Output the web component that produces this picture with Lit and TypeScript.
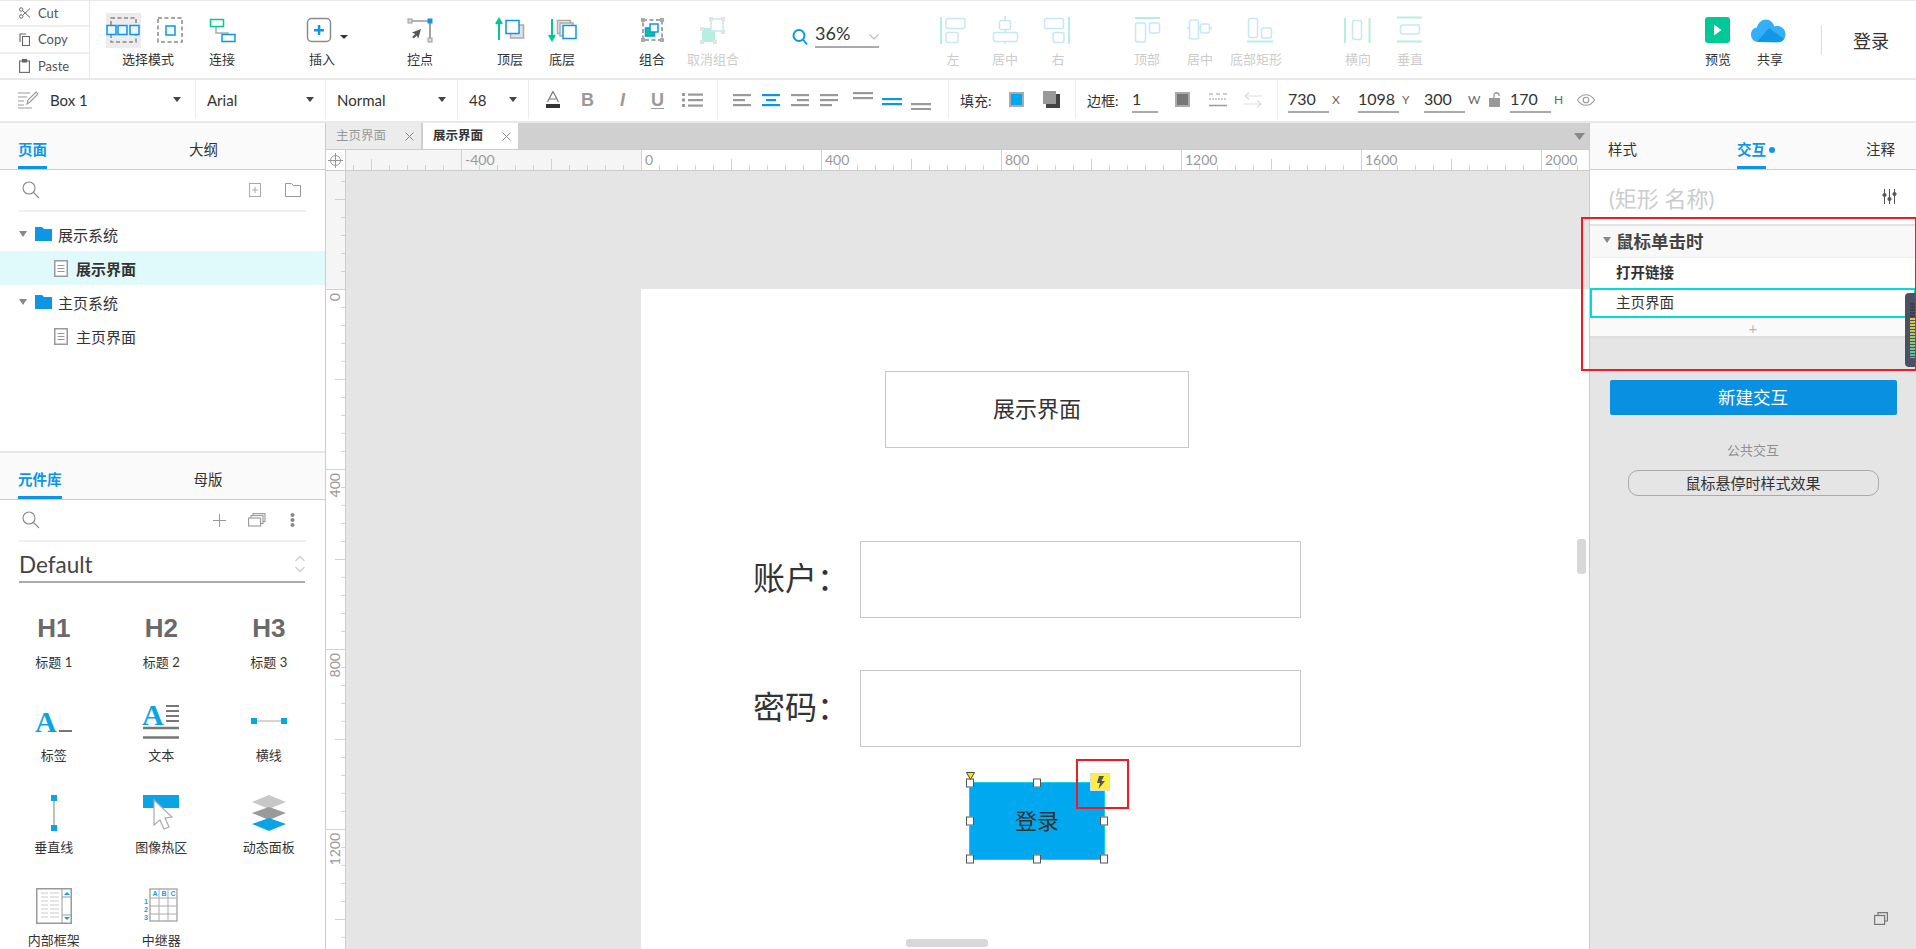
import { LitElement, html, svg, css } from 'lit';
import { customElement } from 'lit/decorators.js';

const BLUE = '#0d96e6';
const TEAL = '#00c896';
const GRAY = '#8c8c8c';
const FAINT_BLUE = '#c6e6fa';
const FAINT_TEAL = '#b6eee0';

const box = (x: number, y: number, w: number, h: number, stroke: string, fill = '#fff', rx = 0, sw = 1.5) =>
  svg`<rect x=${x} y=${y} width=${w} height=${h} rx=${rx} fill=${fill} stroke=${stroke} stroke-width=${sw}></rect>`;
const solid = (x: number, y: number, w: number, h: number, fill: string) =>
  svg`<rect x=${x} y=${y} width=${w} height=${h} fill=${fill}></rect>`;
const dashed = (x: number, y: number, w: number, h: number) =>
  svg`<rect x=${x} y=${y} width=${w} height=${h} fill="none" stroke="#888" stroke-width="1.5" stroke-dasharray="4 2.5"></rect>`;

// toolbar icons are written in page coordinates, the viewBox moves them into the tool
interface Tool {
  label: string;
  left: number;
  gap: number;
  width?: number;
  off?: boolean;
  body: unknown;
}

const tools: Tool[] = [
  {
    label: '选择模式', left: 106, gap: 16, width: 84,
    body: svg`
      ${solid(106, 13, 35, 35, '#ececec')}
      ${dashed(111, 18, 25, 24)}
      ${box(107, 25.5, 9, 9, BLUE, '#eef6fc')}
      ${box(118, 25.5, 9, 9, BLUE, '#eef6fc')}
      ${box(130, 25.5, 9, 9, BLUE, '#eef6fc')}
      ${dashed(158, 18, 24, 24)}
      ${box(166, 26, 9, 9, BLUE)}`,
  },
  {
    label: '连接', left: 196, gap: 6,
    body: svg`
      <path d="M216 26v7h12v2" fill="none" stroke="#aaa" stroke-width="1.5"></path>
      ${box(210.5, 19.5, 13, 7, TEAL)}
      ${box(222, 34.5, 13, 7, BLUE)}`,
  },
  {
    label: '插入', left: 296, gap: 48,
    body: svg`
      ${box(307.5, 18.5, 23, 23, GRAY, '#fff', 4)}
      ${solid(314, 29, 10, 2.5, BLUE)}
      ${solid(317.8, 25, 2.5, 10, BLUE)}
      <path d="M340 35h8l-4 4z" fill="#333"></path>`,
  },
  {
    label: '控点', left: 394, gap: 46,
    body: svg`
      <path d="M410 21h20v19" fill="none" stroke="#666" stroke-width="1.2"></path>
      ${box(408, 19, 4, 4, '#999', '#ddd', 0, 1)}
      ${solid(427.5, 18.5, 5, 5, BLUE)}
      ${box(428, 38, 4, 4, '#999', '#ddd', 0, 1)}
      <path d="M421 29l-9 3.5 3.2 1.4-3 3 1.6 1.6 3-3 1.4 3.2z" fill="#555"></path>`,
  },
  {
    label: '顶层', left: 484, gap: 38,
    body: svg`
      <path d="M499 20v20M496 24l3-5 3 5" fill="#00c896" stroke=${TEAL} stroke-width="2"></path>
      ${box(510.5, 25, 13, 13, '#aaa', '#e2e2e2')}
      ${box(506, 20.5, 13, 13, BLUE)}`,
  },
  {
    label: '底层', left: 536, gap: 0,
    body: svg`
      <path d="M552 19v20M549 35l3 5 3-5" fill="#00c896" stroke=${TEAL} stroke-width="2"></path>
      ${box(557.5, 20.5, 13, 13, '#aaa', '#eee')}
      ${box(560, 23, 13, 13, '#aaa', '#eee')}
      ${box(563, 25.5, 13, 13, BLUE)}`,
  },
  {
    label: '组合', left: 626, gap: 38,
    body: svg`
      ${dashed(643, 20, 19, 20)}
      ${solid(641, 18, 4, 4, '#aaa')}${solid(660, 18, 4, 4, '#aaa')}
      ${solid(641, 38, 4, 4, '#aaa')}${solid(660, 38, 4, 4, '#aaa')}
      ${box(645.5, 28, 9, 8, BLUE, TEAL)}
      ${box(650, 24, 8, 8, BLUE)}`,
  },
  {
    label: '取消组合', left: 687, gap: 9, off: true,
    body: svg`
      ${solid(702, 28, 13, 14, FAINT_TEAL)}
      ${box(711, 19, 12, 12, FAINT_BLUE)}
      ${solid(700, 27, 4, 4, '#e3e3e3')}${solid(713, 40, 4, 4, '#e3e3e3')}
      ${solid(700, 40, 4, 4, '#e3e3e3')}${solid(709, 17, 4, 4, '#e3e3e3')}
      ${solid(721, 17, 4, 4, '#e3e3e3')}${solid(721, 30, 4, 4, '#e3e3e3')}`,
  },
];

const aligns: Tool[] = [
  {
    label: '左', left: 927, gap: 45, off: true,
    body: svg`${solid(940, 17, 2, 27, FAINT_TEAL)}${box(946, 18.5, 19, 10, FAINT_BLUE, '#fff', 2)}${box(946, 32.5, 12, 10, FAINT_BLUE, '#fff', 2)}`,
  },
  {
    label: '居中', left: 979, gap: 0, off: true,
    body: svg`${solid(1004.5, 16, 1.5, 28, FAINT_BLUE)}${box(999.5, 20.5, 11, 9, FAINT_BLUE, '#fff', 2)}${box(993.5, 32.5, 24, 9, FAINT_BLUE, '#fff', 2)}`,
  },
  {
    label: '右', left: 1032, gap: 1, off: true,
    body: svg`${solid(1068, 17, 2, 27, FAINT_TEAL)}${box(1044.5, 18.5, 19, 10, FAINT_BLUE, '#fff', 2)}${box(1053, 32.5, 11, 10, FAINT_BLUE, '#fff', 2)}`,
  },
  {
    label: '顶部', left: 1121, gap: 37, off: true,
    body: svg`${solid(1135, 17, 25, 2, FAINT_TEAL)}${box(1135.5, 23, 10, 19, FAINT_BLUE, '#fff', 2)}${box(1149.5, 23, 10, 10, FAINT_BLUE, '#fff', 2)}`,
  },
  {
    label: '居中', left: 1174, gap: 1, off: true,
    body: svg`${solid(1187, 27.5, 25, 1.5, FAINT_TEAL)}${box(1189.5, 20, 9, 19, FAINT_BLUE, '#fff', 2)}${box(1200.5, 24, 9, 9, FAINT_BLUE, '#fff', 2)}`,
  },
  {
    label: '底部矩形', left: 1230, gap: 4, off: true,
    body: svg`${solid(1247, 40.5, 26, 2, FAINT_TEAL)}${box(1248.5, 18.5, 9, 19, FAINT_BLUE, '#fff', 2)}${box(1261.5, 28, 10, 10, FAINT_BLUE, '#fff', 2)}`,
  },
  {
    label: '横向', left: 1332, gap: 50, off: true,
    body: svg`${solid(1344, 18, 2, 25, FAINT_TEAL)}${solid(1368.5, 18, 2, 25, FAINT_TEAL)}${box(1352.5, 20.5, 9, 19, FAINT_BLUE, '#fff', 2)}`,
  },
  {
    label: '垂直', left: 1384, gap: 0, off: true,
    body: svg`${solid(1397, 16.5, 25, 2, FAINT_TEAL)}${solid(1397, 40.5, 25, 2, FAINT_TEAL)}${box(1400.5, 25, 19, 9, FAINT_BLUE, '#fff', 2)}`,
  },
  {
    label: '预览', left: 1692, gap: 256,
    body: svg`<rect x="1705" y="17" width="25" height="26" rx="3" fill=${TEAL}></rect><path d="M1714 24.5l7.5 5.5-7.5 5.5z" fill="#fff"></path>`,
  },
  {
    label: '共享', left: 1744, gap: 0,
    body: svg`
      <path d="M1758 42c-4 0-7-3-7-7.500 0-4 3-7 6-7 1-5 5-8 9-8 4 0 7 3 8.500 7 1-.5 2-.5 3-.5 4 0 8 3.500 8 8 0 5-3.500 8.500-8 8.500z" fill="#35aefb"></path>
      <path d="M1757 42l12-14 15 11c-1.500 2-3.500 3-6 3z" fill="#1296e6"></path>`,
  },
];

const toolTpl = (t: Tool) => {
  const w = t.width ?? 52;
  return html`<div class="tool ${t.off ? 'off' : ''}" style="margin-left:${t.gap}px;width:${w}px">
    <svg width=${w} height="36" viewBox="${t.left} 13 ${w} 36">${t.body}</svg>
    <span>${t.label}</span>
  </div>`;
};

const caret = html`<svg class="caret" width="8" height="5" viewBox="0 0 8 5"><path d="M0 0h8l-4 5z" fill="#444"></path></svg>`;
const tri = html`<svg width="8" height="6" viewBox="0 0 8 6"><path d="M0 0h8l-4 6z" fill="#888"></path></svg>`;
const searchIco = html`<svg width="18" height="18" viewBox="0 0 18 18" fill="none" stroke="#888" stroke-width="1.1"><circle cx="7" cy="7" r="6"></circle><path d="M11.500 11.500l5.500 5.500"></path></svg>`;
const docIco = html`<svg width="14" height="17" viewBox="0 0 14 17"><rect x=".75" y=".75" width="12.500" height="15.500" fill="#fff" stroke="#999" stroke-width="1.500"></rect><path d="M3.500 5.500h7M3.500 8.500h7M3.500 11.500h7" stroke="#999"></path></svg>`;
const folderIco = html`<svg width="17" height="14" viewBox="0 0 17 14"><path d="M0 0h7l2 2h8v12H0z" fill=${BLUE}></path></svg>`;

// three horizontal bars of an alignment button
const bars = (w: number[], top: number, x: (n: number) => number, color: string) =>
  html`<svg width="22" height="14" viewBox="0 0 22 14">
    ${w.map((n, i) => svg`<rect x=${x(n)} y=${top + i * 5} width=${n} height="2.200" fill=${color}></rect>`)}
  </svg>`;

const pages = [
  { name: '展示系统', folder: true },
  { name: '展示界面', active: true },
  { name: '主页系统', folder: true },
  { name: '主页界面' },
];

const widgets = [
  {
    label: '标题 1',
    ico: html`<b class="hd">H1</b>`,
  },
  { label: '标题 2', ico: html`<b class="hd">H2</b>` },
  { label: '标题 3', ico: html`<b class="hd">H3</b>` },
  {
    label: '标签',
    ico: html`<svg width="36" height="36" viewBox="0 0 36 36"><text x="-1" y="29" class="serifA" fill="#0aa3e3">A</text><rect x="23" y="27" width="13" height="2" fill="#777"></rect></svg>`,
  },
  {
    label: '文本',
    ico: html`<svg width="36" height="36" viewBox="0 0 36 36"><text x="-1" y="22" class="serifA" fill="#0aa3e3">A</text><path d="M23 3h13M23 8h13M23 13h13M23 18h13" stroke="#777" stroke-width="2"></path><path d="M0 25h36M0 34.500h36" stroke="#777" stroke-width="2.500"></path></svg>`,
  },
  {
    label: '横线',
    ico: html`<svg width="36" height="36" viewBox="0 0 36 36"><path d="M3 18h30" stroke="#aaa" stroke-width="1"></path><rect x="0" y="15" width="6" height="6" fill="#0aa3e3"></rect><rect x="30" y="15" width="6" height="6" fill="#0aa3e3"></rect></svg>`,
  },
  {
    label: '垂直线',
    ico: html`<svg width="36" height="36" viewBox="0 0 36 36"><path d="M18 3v30" stroke="#aaa" stroke-width="1.500"></path><rect x="15" y="0" width="6" height="6" fill="#0aa3e3"></rect><rect x="15" y="30" width="6" height="6" fill="#0aa3e3"></rect></svg>`,
  },
  {
    label: '图像热区',
    ico: html`<svg width="36" height="36" viewBox="0 0 36 36"><rect width="36" height="13" fill="#0aa3e3"></rect><path d="M11 5v25l6-5 4 9 5-2-4-9 7-1z" fill="#fff" stroke="#aaa" stroke-width="1.200"></path></svg>`,
  },
  {
    label: '动态面板',
    ico: html`<svg width="36" height="36" viewBox="0 0 36 36"><path d="M18 0l17 7-17 7-17-7z" fill="#c8c8c8"></path><path d="M18 12l17 6-17 7-17-7z" fill="#9a9a9a"></path><path d="M18 23l17 6-17 7-17-7z" fill="#0aa3e3"></path></svg>`,
  },
  {
    label: '内部框架',
    ico: html`<svg width="36" height="36" viewBox="0 0 36 36"><rect x=".75" y=".75" width="34.500" height="34.500" fill="#fff" stroke="#999" stroke-width="1.500"></rect><path d="M5 5h7M14 5h9M5 9h7M14 9h9M5 13h7M14 13h9M5 17h7M14 17h9M5 21h7M14 21h9M5 25h7M14 25h9M5 29h7M14 29h9" stroke="#ccc" stroke-width="1.200"></path><path d="M26 1v34M26 9h9M26 27h9" stroke="#999"></path><path d="M28 7l3-3 3 3zM28 29l3 3 3-3z" fill="#0aa3e3"></path></svg>`,
  },
  {
    label: '中继器',
    ico: html`<svg width="36" height="36" viewBox="0 0 36 36"><rect x="7" y="1" width="27" height="32" fill="#fff" stroke="#999" stroke-width="1.200"></rect><path d="M7 10h27M7 18h27M7 26h27M16 1v32M25 1v32" stroke="#aaa"></path><text x="9.500" y="8" class="mini">A</text><text x="18.500" y="8" class="mini">B</text><text x="27.500" y="8" class="mini">C</text><text x="1" y="16" class="mini">1</text><text x="1" y="24" class="mini">2</text><text x="1" y="32" class="mini">3</text></svg>`,
  },
];

const range = (from: number, to: number, step: number) => {
  const out: number[] = [];
  for (let v = from; v <= to; v += step) out.push(v);
  return out;
};

// 180px on screen stands for 400 units, a tick each 18px
const hRuler = () => html`<svg class="ruler-h" width="1243" height="20" viewBox="0 0 1243 20">
  <rect width="295" height="20" fill="#f5f5f5"></rect>
  ${range(7, 1243, 18).map((x) => {
    const unit = Math.round((x - 295) / 18);
    const h = unit % 10 === 0 ? 20 : unit % 5 === 0 ? 11 : 5;
    return svg`<rect x=${x} y=${20 - h} width="1" height=${h} fill="#d2d2d2"></rect>`;
  })}
  ${[-400, 0, 400, 800, 1200, 1600, 2000].map(
    (u) => svg`<text x=${295 + u * 0.45 + 4} y="15" class="rl">${u}</text>`,
  )}
</svg>`;

const vRuler = () => html`<svg class="ruler-v" width="20" height="779" viewBox="0 0 20 779">
  <rect width="20" height="118" fill="#f5f5f5"></rect>
  ${range(10, 779, 18).map((y) => {
    const unit = Math.round((y - 118) / 18);
    const w = unit % 10 === 0 ? 20 : unit % 5 === 0 ? 11 : 5;
    return svg`<rect x=${20 - w} y=${y} width=${w} height="1" fill="#d2d2d2"></rect>`;
  })}
  ${[0, 400, 800, 1200].map((u) => {
    const y = 118 + u * 0.45 + 4;
    return svg`<text transform="translate(14 ${y}) rotate(-90)" text-anchor="end" class="rl">${u}</text>`;
  })}
  <rect x="19" width="1" height="779" fill="#ccc"></rect>
</svg>`;

@customElement('app-root')
export class AppRoot extends LitElement {
  static styles = css`
    :host {
      display: flex;
      flex-direction: column;
      width: 100%;
      height: 100vh;
      overflow: hidden;
      background: #fff;
      color: #333;
      font-family: Lato, 'Noto Sans CJK SC', sans-serif;
      font-size: 15px;
    }
    svg {
      display: block;
      flex: none;
    }

    /* first toolbar row */
    .bar1 {
      display: flex;
      height: 80px;
      flex: none;
      box-sizing: border-box;
      border-top: 1px solid #e8e8e8;
      border-bottom: 2px solid #e8e8e8;
    }
    .clip {
      width: 90px;
      flex: none;
      box-sizing: border-box;
      border-right: 1px solid #e8e8e8;
      display: flex;
      flex-direction: column;
    }
    .clip div {
      flex: 1;
      display: flex;
      align-items: center;
      gap: 8px;
      padding-left: 19px;
      font-size: 13px;
      color: #555;
      border-bottom: 2px solid #efefef;
    }
    .clip div:last-child {
      border-bottom: 0;
    }
    .tool {
      flex: none;
      display: flex;
      flex-direction: column;
      align-items: center;
      padding-top: 12px;
      font-size: 13px;
      white-space: nowrap;
    }
    .tool span {
      line-height: 18px;
      margin-top: 1px;
    }
    .tool.off span {
      color: #ccc;
    }
    .zoom {
      flex: none;
      width: 90px;
      margin-left: 53px;
      display: flex;
      align-items: flex-end;
      height: 47px;
    }
    .zoom .val {
      margin-left: 7px;
      width: 64px;
      height: 26px;
      box-sizing: border-box;
      border-bottom: 2px solid #aaa;
      font-size: 18px;
      line-height: 22px;
      display: flex;
      justify-content: space-between;
      align-items: flex-start;
    }
    .zoom .val svg {
      margin-top: 12px;
    }
    .zoom > svg {
      margin-bottom: 2px;
    }
    .sep {
      width: 1px;
      height: 30px;
      background: #ddd;
      margin: 24px 0 0 25px;
    }
    .login {
      margin: 27px 0 0 31px;
      font-size: 18px;
      line-height: 26px;
    }

    /* second toolbar row */
    .bar2 {
      display: flex;
      height: 43px;
      flex: none;
      box-sizing: border-box;
      border-bottom: 2px solid #e8e8e8;
      padding-bottom: 2px;
    }
    .cell {
      flex: none;
      box-sizing: border-box;
      display: flex;
      align-items: center;
      border-right: 1px solid #ececec;
      padding: 0 11px;
    }
    .c-name {
      width: 196px;
      padding: 0 14px 0 18px;
      gap: 12px;
    }
    .c-font {
      width: 130px;
    }
    .c-style {
      width: 132px;
    }
    .c-size {
      width: 71px;
    }
    .c-text {
      width: 189px;
      padding: 0 0 0 6px;
    }
    .c-align {
      width: 231px;
      padding: 0 0 0 9px;
    }
    .c-fill {
      width: 127px;
    }
    .c-line {
      width: 202px;
    }
    .c-geo {
      flex: 1;
      border-right: 0;
      padding-left: 10px;
    }
    .caret {
      margin-left: auto;
    }
    .btn {
      flex: none;
      width: 35px;
      display: flex;
      justify-content: center;
      color: #9a9a9a;
      font: bold 18px/20px 'Liberation Sans', sans-serif;
    }
    .btn i {
      font-style: italic;
    }
    .btn u {
      text-underline-offset: 2px;
    }
    .al {
      flex: none;
      width: 29px;
      display: flex;
      justify-content: center;
    }
    .al.skip {
      margin-left: 6px;
    }
    .lab {
      flex: none;
      font-size: 14px;
      white-space: nowrap;
    }
    .c-fill .lab,
    .c-line .lab {
      width: 49px;
    }
    .c-line .lab {
      width: 45px;
    }
    .swatch {
      flex: none;
      width: 15px;
      height: 15px;
      box-sizing: border-box;
      border: 2px solid #aaa;
      background: #00a8f0;
    }
    .swatch.dark {
      background: #777;
    }
    .shadow {
      margin-left: 19px;
    }
    .input {
      flex: none;
      box-sizing: border-box;
      height: 24px;
      border-bottom: 2px solid #aaa;
      font-size: 16px;
      line-height: 20px;
      margin-top: 2px;
    }
    .w26 {
      width: 26px;
    }
    .w41 {
      width: 41px;
    }
    .letter {
      flex: none;
      font-size: 12px;
      color: #666;
      margin-left: 3px;
    }
    .c-line .swatch {
      margin-left: 17px;
    }
    .c-line .dash {
      margin-left: 19px;
    }
    .c-line .swap {
      margin-left: 17px;
    }

    /* panels */
    .main {
      flex: 1;
      display: flex;
      min-height: 0;
    }
    .left {
      width: 326px;
      flex: none;
      box-sizing: border-box;
      border-right: 1px solid #ccc;
      display: flex;
      flex-direction: column;
    }
    .tabs {
      height: 47px;
      flex: none;
      box-sizing: border-box;
      display: flex;
      background: #fafafa;
      border-bottom: 1px solid #ccc;
      padding-left: 18px;
      font-size: 14.5px;
      line-height: 20px;
    }
    .tab {
      position: relative;
      height: 46px;
      box-sizing: border-box;
      padding-top: 17px;
      border-bottom: 3px solid transparent;
    }
    .tab.on {
      color: #0d96e6;
      border-bottom-color: #0d96e6;
      font-weight: 700;
    }
    .pages {
      height: 330px;
      flex: none;
      box-sizing: border-box;
      border-bottom: 2px solid #e8e8e8;
    }
    .p-tabs {
      gap: 142px;
    }
    .l-tabs {
      gap: 132px;
    }
    .tools {
      height: 42px;
      margin: 0 19px;
      box-sizing: border-box;
      border-bottom: 2px solid #efefef;
      display: flex;
      align-items: center;
      padding: 0 5px 0 3px;
    }
    .lib .tools {
      padding-right: 11px;
    }
    .tools .first {
      margin-left: auto;
    }
    .tree {
      margin-top: 5px;
    }
    .row {
      height: 34px;
      display: flex;
      align-items: center;
      box-sizing: border-box;
      white-space: nowrap;
    }
    .row.folder {
      padding-left: 19px;
    }
    .row.folder svg:nth-child(2) {
      margin: 0 6px 0 8px;
    }
    .row.page {
      padding-left: 54px;
      gap: 8px;
    }
    .row.on {
      background: #e0f9fa;
      font-weight: 700;
    }
    .lib {
      flex: 1;
      min-height: 0;
    }
    .default {
      height: 41px;
      margin: 0 20px 0 19px;
      box-sizing: border-box;
      border-bottom: 2px solid #aaa;
      padding-top: 5px;
      display: flex;
      align-items: center;
      justify-content: space-between;
      font-size: 22.5px;
      color: #444;
    }
    .grid {
      margin-top: 27px;
      display: grid;
      grid-template-columns: repeat(3, 107.5px);
      grid-auto-rows: 92.67px;
    }
    .widget {
      display: flex;
      flex-direction: column;
      align-items: center;
      font-size: 13px;
      line-height: 18px;
      white-space: nowrap;
    }
    .widget .ico {
      height: 36px;
      margin-bottom: 7px;
      display: flex;
      align-items: center;
    }
    .widget svg {
      overflow: visible;
    }
    .hd {
      font: bold 26px/36px 'Liberation Sans', sans-serif;
      color: #6a6a6a;
    }
    .serifA {
      font: bold 30px 'Liberation Serif', serif;
    }
    .mini {
      font: bold 7px 'Liberation Sans', sans-serif;
      fill: #0aa3e3;
    }

    /* middle */
    .mid {
      width: 1263px;
      flex: none;
      display: flex;
      flex-direction: column;
    }
    .doc-tabs {
      height: 27px;
      flex: none;
      box-sizing: border-box;
      display: flex;
      background: #d0d0d0;
      position: relative;
      border-bottom: 1px solid #ccc;
    }
    .doc {
      width: 95px;
      box-sizing: border-box;
      background: #ececec;
      display: flex;
      align-items: center;
      justify-content: space-between;
      padding: 0 7px 0 10px;
      margin-right: 2px;
      font-size: 12.5px;
      color: #999;
    }
    .doc span {
      margin-bottom: 4px;
    }
    .doc.on {
      background: #fff;
      color: #333;
      font-weight: 700;
      margin-right: 0;
    }
    .doc-more {
      position: absolute;
      right: 4px;
      top: 10px;
    }
    .rulers {
      height: 20px;
      flex: none;
      display: flex;
      border-bottom: 1px solid #ccc;
    }
    .corner {
      width: 19px;
      flex: none;
      display: flex;
      align-items: center;
      justify-content: center;
      background: #fff;
      border-right: 1px solid #ccc;
    }
    .rl {
      font: 14px Lato, sans-serif;
      fill: #999;
    }
    .work {
      flex: 1;
      display: flex;
      min-height: 0;
    }
    .canvas {
      position: relative;
      flex: 1;
      background: #e5e5e5;
    }
    .sheet {
      position: absolute;
      left: 295px;
      top: 118px;
      right: 0;
      bottom: 0;
      background: #fff;
    }
    .shape {
      position: absolute;
      box-sizing: border-box;
      border: 1px solid #c8c8c8;
      display: flex;
      align-items: center;
      justify-content: center;
    }
    .title {
      left: 244px;
      top: 82px;
      width: 304px;
      height: 77px;
      font-size: 22px;
      padding-bottom: 5px;
    }
    .in1,
    .in2 {
      left: 219px;
      width: 441px;
      height: 77px;
    }
    .in1 {
      top: 252px;
    }
    .in2 {
      top: 381px;
    }
    .cap {
      position: absolute;
      left: 112px;
      font-size: 32px;
      line-height: 40px;
    }
    .cap1 {
      top: 269px;
    }
    .cap2 {
      top: 398px;
    }
    .submit {
      left: 328px;
      top: 493px;
      width: 136px;
      height: 78px;
      padding-bottom: 4px;
      background: #00a8f0;
      border: 1.5px solid #18d0e0;
      font-size: 22px;
    }
    .handle {
      position: absolute;
      width: 8px;
      height: 9px;
      box-sizing: border-box;
      background: #fff;
      border: 1px solid #555;
      transform: translate(-50%, -50%);
    }
    .anchor {
      position: absolute;
      left: -4px;
      top: -11px;
    }
    .flash {
      position: absolute;
      left: 120px;
      top: -10px;
      width: 20px;
      height: 18px;
      box-sizing: border-box;
      background: #ffee44;
      border: 1px solid #ddd;
      display: flex;
      align-items: center;
      justify-content: center;
    }
    .mark {
      position: absolute;
      box-sizing: border-box;
      border: 2px solid #ed1c24;
      z-index: 2;
    }
    .mark-flash {
      left: 435px;
      top: 470px;
      width: 53px;
      height: 50px;
    }
    .mark-act {
      left: -9px;
      top: 94px;
      width: 336px;
      height: 154px;
    }
    .thumb {
      position: absolute;
      background: #d8d8d8;
      border-radius: 3px;
    }
    .thumb-v {
      left: 936px;
      top: 250px;
      width: 9px;
      height: 35px;
    }
    .thumb-h {
      left: 265px;
      top: 650px;
      width: 82px;
      height: 8px;
    }

    /* right */
    .right {
      position: relative;
      flex: 1;
      box-sizing: border-box;
      border-left: 1px solid #ccc;
      display: flex;
      flex-direction: column;
    }
    .r-tabs {
      gap: 100px;
    }
    .dot {
      position: absolute;
      right: -9px;
      top: 24px;
      width: 6px;
      height: 6px;
      border-radius: 50%;
      background: #0d96e6;
    }
    .name {
      height: 55px;
      flex: none;
      box-sizing: border-box;
      display: flex;
      align-items: center;
      justify-content: space-between;
      padding: 0 19px;
      margin-top: -1px;
      font-size: 22px;
      color: #ccc;
    }
    .ev {
      height: 34px;
      flex: none;
      box-sizing: border-box;
      background: #f8f8f8;
      border-top: 2px solid #e2e2e2;
      border-bottom: 1px solid #eee;
      display: flex;
      align-items: center;
      gap: 6px;
      padding: 0 0 3px 13px;
      font-size: 17.5px;
      font-weight: 700;
      color: #444;
    }
    .ev span {
      margin-left: -1px;
    }
    .act {
      height: 30px;
      flex: none;
      box-sizing: border-box;
      display: flex;
      align-items: center;
      padding: 0 0 3px 26px;
      font-weight: 700;
      font-size: 14.5px;
    }
    .target {
      height: 30px;
      flex: none;
      box-sizing: border-box;
      display: flex;
      align-items: center;
      padding: 0 0 3px 24px;
      border: 2px solid #00dcd8;
      font-size: 14.5px;
    }
    .add {
      height: 20px;
      flex: none;
      box-sizing: border-box;
      background: #fafafa;
      border-bottom: 2px solid #ddd;
      display: flex;
      align-items: center;
      justify-content: center;
      color: #bbb;
      font-size: 16px;
    }
    .rest {
      flex: 1;
      background: #e5e5e5;
      display: flex;
      flex-direction: column;
      align-items: center;
      padding-top: 42px;
    }
    .new {
      width: 287px;
      height: 35px;
      border-radius: 2px;
      background: #0a90e0;
      color: #fff;
      font-size: 17.5px;
      padding-bottom: 2px;
      box-sizing: border-box;
      display: flex;
      align-items: center;
      justify-content: center;
    }
    .shared {
      margin-top: 25px;
      font-size: 13px;
      line-height: 20px;
      color: #909090;
    }
    .pill {
      margin-top: 10px;
      width: 251px;
      height: 26px;
      box-sizing: border-box;
      border: 1.5px solid #aaa;
      border-radius: 10px;
      display: flex;
      align-items: center;
      justify-content: center;
      padding-bottom: 2px;
      font-size: 15px;
    }
    .dock {
      margin: auto 28px 24px auto;
    }
    .meter {
      position: absolute;
      right: 0;
      top: 170px;
      width: 11px;
      height: 74px;
      box-sizing: border-box;
      padding: 9px 0 9px 5px;
      background: #4c5161;
      border-radius: 4px 0 0 4px;
      z-index: 1;
    }
    .meter div {
      height: 100%;
      background: repeating-linear-gradient(#4c5161 0 1px, transparent 1px 3px),
        linear-gradient(#3a3f4c 0 28%, #e8c84a 29%, #9ccc66 65%, #4cbfa8 100%);
    }
  `;

  renderTopBar() {
    return html`<div class="bar1">
      <div class="clip">
        <div>
          <svg width="11" height="12" viewBox="0 0 11 12" fill="none" stroke="#666" stroke-width="1"><circle cx="2.200" cy="2.500" r="1.700"></circle><circle cx="2.200" cy="9.500" r="1.700"></circle><path d="M3.500 3.500L11 10.500M3.500 8.500L11 1.500"></path></svg>
          Cut
        </div>
        <div>
          <svg width="11" height="13" viewBox="0 0 11 13" fill="none" stroke="#666" stroke-width="1.100"><path d="M1 9V1h6"></path><rect x="3.500" y="3.500" width="7" height="9"></rect></svg>
          Copy
        </div>
        <div>
          <svg width="11" height="14" viewBox="0 0 11 14" fill="none" stroke="#666" stroke-width="1.100"><rect x=".6" y="2" width="9.800" height="11.400"></rect><rect x="3.500" y=".5" width="4" height="2.500" fill="#666"></rect></svg>
          Paste
        </div>
      </div>
      ${tools.map(toolTpl)}
      <div class="zoom">
        <svg width="16" height="18" viewBox="0 0 16 18" fill="none" stroke="#0d96e6" stroke-width="2"><circle cx="7" cy="7.500" r="5.500"></circle><path d="M11 11.500l4 5"></path></svg>
        <div class="val">36%<svg width="10" height="6" viewBox="0 0 10 6" fill="none" stroke="#bbb" stroke-width="1.200"><path d="M.5.5L5 5 9.500.5"></path></svg></div>
      </div>
      ${aligns.map(toolTpl)}
      <div class="sep"></div>
      <div class="login">登录</div>
    </div>`;
  }

  renderFormatBar() {
    return html`<div class="bar2">
      <div class="cell c-name">
        <svg width="20" height="18" viewBox="0 0 20 18" fill="none" stroke="#999" stroke-width="1.100"><path d="M0 2h12M0 6h9M0 10h6M0 14h6M0 17h14"></path><path d="M9 13l1-4 8-8 2 2-8 8z"></path></svg>
        <span>Box 1</span>${caret}
      </div>
      <div class="cell c-font"><span>Arial</span>${caret}</div>
      <div class="cell c-style"><span>Normal</span>${caret}</div>
      <div class="cell c-size"><span>48</span>${caret}</div>
      <div class="cell c-text">
        <div class="btn">
          <svg width="14" height="17" viewBox="0 0 14 17"><path d="M1.500 11L7 0.500 12.500 11M3.500 8h7" fill="none" stroke="#777" stroke-width="1.200"></path><rect y="13" width="14" height="4" fill="#333"></rect></svg>
        </div>
        <div class="btn">B</div>
        <div class="btn"><i>I</i></div>
        <div class="btn"><u>U</u></div>
        <div class="btn">
          <svg width="21" height="14" viewBox="0 0 21 14" fill="#999"><rect width="3" height="3" y="0"></rect><rect width="3" height="3" y="5.500"></rect><rect width="3" height="3" y="11"></rect><rect x="6" y=".5" width="15" height="2.200"></rect><rect x="6" y="6" width="15" height="2.200"></rect><rect x="6" y="11.500" width="15" height="2.200"></rect></svg>
        </div>
      </div>
      <div class="cell c-align">
        <div class="al">${bars([18, 12, 18], 1, () => 2, '#999')}</div>
        <div class="al">${bars([18, 10, 18], 1, (n) => 11 - n / 2, BLUE)}</div>
        <div class="al">${bars([18, 12, 18], 1, (n) => 20 - n, '#999')}</div>
        <div class="al">${bars([18, 18, 12], 1, () => 2, '#999')}</div>
        <div class="al skip">
          <svg width="22" height="20" viewBox="0 0 22 20" fill="#999"><rect width="20" height="2.200" y="2"></rect><rect width="20" height="2.200" y="7"></rect></svg>
        </div>
        <div class="al">
          <svg width="22" height="20" viewBox="0 0 22 20" fill=${BLUE}><rect width="20" height="2.200" y="8"></rect><rect width="20" height="2.200" y="13"></rect></svg>
        </div>
        <div class="al">
          <svg width="22" height="20" viewBox="0 0 22 20" fill="#999"><rect width="20" height="2.200" y="13"></rect><rect width="20" height="2.200" y="18"></rect></svg>
        </div>
      </div>
      <div class="cell c-fill">
        <span class="lab">填充:</span>
        <div class="swatch"></div>
        <svg class="shadow" width="17" height="17" viewBox="0 0 17 17"><rect x="3" y="3" width="14" height="14" fill="#444"></rect><rect width="13" height="13" fill="#999"></rect></svg>
      </div>
      <div class="cell c-line">
        <span class="lab">边框:</span>
        <div class="input w26">1</div>
        <div class="swatch dark"></div>
        <svg class="dash" width="18" height="14" viewBox="0 0 18 14" fill="none" stroke="#999"><path d="M0 1h18" stroke-dasharray="4 3"></path><path d="M0 6h18" stroke-dasharray="2 1"></path><path d="M0 12.500h18" stroke-width="1.500"></path></svg>
        <svg class="swap" width="18" height="16" viewBox="0 0 18 16" fill="none" stroke="#ddd" stroke-width="1.200"><path d="M18 4H1M5 .5L1 4l4 3.500M0 12h17M13 8.500l4 3.500-4 3.500"></path></svg>
      </div>
      <div class="cell c-geo">
        <div class="input w41">730</div><span class="letter" style="width:26px">X</span>
        <div class="input w41">1098</div><span class="letter" style="width:22px">Y</span>
        <div class="input w41">300</div><span class="letter" style="width:12px">W</span>
        <svg style="margin:0 10px 0 9px" width="11" height="15" viewBox="0 0 11 15"><rect y="6" width="11" height="9" fill="#999"></rect><path d="M5 6V3c0-3 5-3 5 0v1" fill="none" stroke="#999" stroke-width="1.300"></path></svg>
        <div class="input w41">170</div><span class="letter">H</span>
        <svg style="margin-left:14px" width="18" height="12" viewBox="0 0 18 12" fill="none" stroke="#999" stroke-width="1.100"><path d="M.5 6C5-1 13-1 17.500 6 13 13 5 13 .5 6z"></path><circle cx="9" cy="6" r="2.800"></circle></svg>
      </div>
    </div>`;
  }

  renderLeft() {
    return html`<div class="left">
      <div class="pages">
        <div class="tabs p-tabs"><div class="tab on">页面</div><div class="tab">大纲</div></div>
        <div class="tools">
          ${searchIco}
          <svg class="first" width="12" height="14" viewBox="0 0 12 14" fill="none" stroke="#aaa"><rect x=".5" y=".5" width="11" height="13"></rect><path d="M3 7h6M6 4v6"></path></svg>
          <svg style="margin-left:24px" width="16" height="14" viewBox="0 0 16 14" fill="none" stroke="#999"><path d="M.5.5h6l2 2h7v11H.5z"></path></svg>
        </div>
        <div class="tree">
          ${pages.map((p) =>
            p.folder
              ? html`<div class="row folder">${tri}${folderIco}<span>${p.name}</span></div>`
              : html`<div class="row page ${p.active ? 'on' : ''}">${docIco}<span>${p.name}</span></div>`,
          )}
        </div>
      </div>
      <div class="lib">
        <div class="tabs l-tabs"><div class="tab on">元件库</div><div class="tab">母版</div></div>
        <div class="tools">
          ${searchIco}
          <svg class="first" width="13" height="13" viewBox="0 0 13 13" stroke="#999"><path d="M0 6.500h13M6.500 0v13"></path></svg>
          <svg style="margin-left:22px" width="18" height="14" viewBox="0 0 18 14" fill="#fff" stroke="#999" stroke-width="1.100"><rect x="5" y=".6" width="12" height="8"></rect><rect x="3" y="2.500" width="12" height="8"></rect><rect x=".6" y="5" width="12" height="8"></rect></svg>
          <svg style="margin-left:24px" width="5" height="14" viewBox="0 0 5 14" fill="#888"><circle cx="2.500" cy="2" r="2"></circle><circle cx="2.500" cy="7" r="2"></circle><circle cx="2.500" cy="12" r="2"></circle></svg>
        </div>
        <div class="default">
          <span>Default</span>
          <svg width="10" height="16" viewBox="0 0 10 16" fill="none" stroke="#ccc" stroke-width="1.200"><path d="M.5 5L5 .5 9.500 5M.5 11L5 15.500 9.500 11"></path></svg>
        </div>
        <div class="grid">
          ${widgets.map(
            (w) => html`<div class="widget"><div class="ico">${w.ico}</div><span>${w.label}</span></div>`,
          )}
        </div>
      </div>
    </div>`;
  }

  renderMiddle() {
    const handles = [
      [0, 0],
      [50, 0],
      [100, 0],
      [0, 50],
      [100, 50],
      [0, 100],
      [50, 100],
      [100, 100],
    ];
    const x = html`<svg width="9" height="9" viewBox="0 0 9 9" stroke="#888" fill="none"><path d="M.5.5l8 8M8.500.5l-8 8"></path></svg>`;
    return html`<div class="mid">
      <div class="doc-tabs">
        <div class="doc"><span>主页界面</span>${x}</div>
        <div class="doc on"><span>展示界面</span>${x}</div>
        <svg class="doc-more" width="11" height="7" viewBox="0 0 11 7"><path d="M0 0h11L5.500 7z" fill="#888"></path></svg>
      </div>
      <div class="rulers">
        <div class="corner">
          <svg width="15" height="15" viewBox="0 0 15 15" fill="none" stroke="#999"><circle cx="7.500" cy="7.500" r="5"></circle><path d="M0 7.500h15M7.500 0v15"></path></svg>
        </div>
        ${hRuler()}
      </div>
      <div class="work">
        ${vRuler()}
        <div class="canvas">
          <div class="sheet">
            <div class="shape title">展示界面</div>
            <div class="cap cap1">账户：</div>
            <div class="shape in1"></div>
            <div class="cap cap2">密码：</div>
            <div class="shape in2"></div>
            <div class="shape submit">
              登录
              ${handles.map(
                ([l, t]) => html`<i class="handle" style="left:${l}%;top:${t}%"></i>`,
              )}
              <svg class="anchor" width="9" height="8" viewBox="0 0 9 8"><path d="M.5.5h8L4.500 7.500z" fill="#ffe600" stroke="#444"></path></svg>
              <div class="flash">
                <svg width="9" height="13" viewBox="0 0 9 13"><path d="M3 0h5L5.500 5H9L2.500 13l1.500-6H1z" fill="#555"></path></svg>
              </div>
            </div>
            <div class="mark mark-flash"></div>
            <div class="thumb thumb-v"></div>
            <div class="thumb thumb-h"></div>
          </div>
        </div>
      </div>
    </div>`;
  }

  renderRight() {
    return html`<div class="right">
      <div class="tabs r-tabs">
        <div class="tab">样式</div>
        <div class="tab on">交互<i class="dot"></i></div>
        <div class="tab">注释</div>
      </div>
      <div class="name">
        <span>(矩形 名称)</span>
        <svg width="15" height="15" viewBox="0 0 15 15" stroke="#555" fill="#555"><path d="M2.500 0v15M7.500 0v15M12.500 0v15" stroke-width="1"></path><circle cx="2.500" cy="6" r="1.600"></circle><circle cx="7.500" cy="10" r="1.600"></circle><circle cx="12.500" cy="5" r="1.600"></circle></svg>
      </div>
      <div class="ev">${tri}<span>鼠标单击时</span></div>
      <div class="act">打开链接</div>
      <div class="target">主页界面</div>
      <div class="add">+</div>
      <div class="rest">
        <div class="new">新建交互</div>
        <div class="shared">公共交互</div>
        <div class="pill">鼠标悬停时样式效果</div>
        <svg class="dock" width="14" height="13" viewBox="0 0 14 13" fill="none" stroke="#777" stroke-width="1.200"><path d="M4 3V.6h9.400V9H11"></path><rect x=".6" y="3.500" width="10" height="8.900"></rect></svg>
      </div>
      <div class="meter"><div></div></div>
      <div class="mark mark-act"></div>
    </div>`;
  }

  render() {
    return html`
      ${this.renderTopBar()} ${this.renderFormatBar()}
      <div class="main">${this.renderLeft()} ${this.renderMiddle()} ${this.renderRight()}</div>
    `;
  }
}
